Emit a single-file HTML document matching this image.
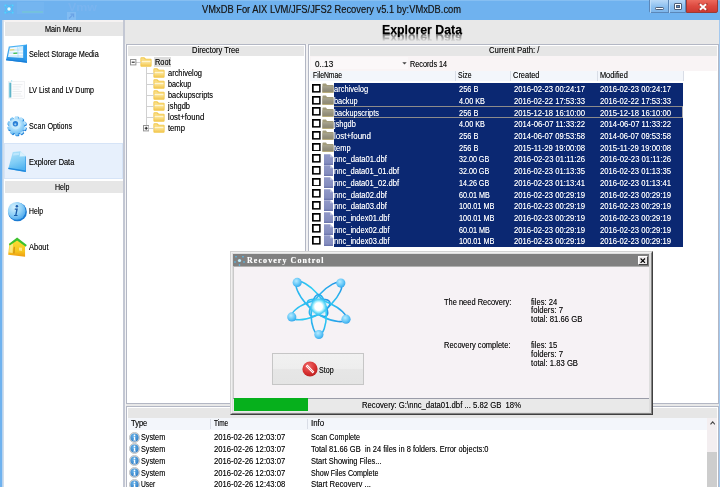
<!DOCTYPE html>
<html><head>
<meta charset="utf-8">
<title>VMxDB</title>
<style>
html,body{margin:0;padding:0;}
body{width:720px;height:487px;overflow:hidden;position:relative;background:#e8e8e8;font-family:"Liberation Sans",sans-serif;font-size:9px;color:#111;}
.a{position:absolute;}
.t{position:absolute;white-space:pre;line-height:11px;height:11px;margin-top:-4.7px;transform-origin:0 50%;text-shadow:0 0 0.7px rgba(0,0,0,0.55);}
.t.w{text-shadow:0 0 0.7px rgba(255,255,255,0.6);}
.w{color:#fff;}
#titlebar{left:0;top:0;width:720px;height:20px;background:#6fb2ef;}
#lb{left:0;top:20px;width:2px;height:467px;background:#6fb2ef;box-shadow:1.5px 0 0 #b9d3ee;}
#rb{left:719px;top:20px;width:1px;height:467px;background:#a4c9ef;}
#side{left:4px;top:20px;width:119px;height:467px;background:#fff;}
.hd{background:#e6e6e6;}
.panel{background:#fff;border:1px solid #b3b7c4;box-sizing:border-box;}
.sel{background:#0b2872;}
.hl{height:1px;background:#d0d0d0;}
.vl{width:1px;background:#d0d0d0;}
.pm{width:5.6px;height:5.6px;box-sizing:border-box;border:0.7px solid #8c8c8c;background:#fff;}
.pm i{position:absolute;left:0.9px;right:0.9px;top:1.75px;height:0.8px;background:#222;}
.pm b{position:absolute;top:0.9px;bottom:0.9px;left:1.75px;width:0.8px;background:#222;}
.cs{width:0.8px;height:10px;background:#d9dde6;}
.cb{position:absolute;left:312.4px;width:8.7px;height:8.7px;box-sizing:border-box;border:1.5px solid #000;background:#fff;}
</style>
</head>
<body>
<svg width="0" height="0" style="position:absolute">
<defs>
<linearGradient id="gy" x1="0" y1="0" x2="0" y2="1"><stop offset="0" stop-color="#fdefb8"></stop><stop offset="0.5" stop-color="#f9dc82"></stop><stop offset="1" stop-color="#f3c855"></stop></linearGradient>
<linearGradient id="gg" x1="0" y1="0" x2="0" y2="1"><stop offset="0" stop-color="#a9a590"></stop><stop offset="0.5" stop-color="#96927f"></stop><stop offset="1" stop-color="#8d8872"></stop></linearGradient>
<linearGradient id="gf" x1="0" y1="0" x2="0" y2="1"><stop offset="0" stop-color="#9199c8"></stop><stop offset="0.8" stop-color="#838cbe"></stop><stop offset="1" stop-color="#6771a8"></stop></linearGradient>
<radialGradient id="gi" cx="0.4" cy="0.3" r="0.8"><stop offset="0" stop-color="#6ab4ea"></stop><stop offset="1" stop-color="#2a78c2"></stop></radialGradient>
<symbol id="fold" viewBox="0 0 12.2 10">
<path d="M0.4 1.5 Q0.4 0.3 1.5 0.3 L4 0.3 Q4.7 0.3 5.2 0.9 L5.9 1.7 L10.6 1.7 Q11.6 1.7 11.6 2.7 L11.6 8.7 Q11.6 9.7 10.6 9.7 L1.4 9.7 Q0.4 9.7 0.4 8.7 Z" fill="#f2c748"></path>
<path d="M1.2 1.2 L4 1.2 L4.9 2.4 L10.8 2.4 L10.8 3.4 L1.2 3.4 Z" fill="#f9dd84"></path>
<path d="M1.3 3.7 L10.8 3.7 L10.8 8.3 Q10.8 8.9 10.2 8.9 L1.9 8.9 Q1.3 8.9 1.3 8.3 Z" fill="url(#gy)"></path>
<path d="M1.9 4.3 L10.2 4.3" stroke="#fffbe8" stroke-width="0.8"></path>
</symbol>
<symbol id="gfold" viewBox="0 0 12 11">
<path d="M0.4 1.4 Q0.4 0.6 1.2 0.6 L4 0.6 L5 2 L11 2 Q11.5 2 11.5 2.6 L11.5 9.6 L0.4 9.6 Z" fill="#a29c7c"></path>
<path d="M0.4 3.2 L11.5 3.2 L11.5 9.2 L0.4 9.2 Z" fill="url(#gg)"></path>
<path d="M0.4 9.4 L11.5 9.4" stroke="#b3a56a" stroke-width="0.8"></path>
</symbol>
<symbol id="gfile" viewBox="0 0 11 11.4">
<path d="M1 0.3 L7 0.3 L10 3.2 L10 11 L1 11 Z" fill="url(#gf)"></path>
<path d="M7 0.3 L7 3.2 L10 3.2 Z" fill="#b9bfdf"></path>
</symbol>
<symbol id="cbx" viewBox="0 0 8.8 8.8"><rect x="0.85" y="0.85" width="7.1" height="7.1" fill="#fff" stroke="#000" stroke-width="1.7"></rect></symbol>
<symbol id="info" viewBox="0 0 11 11">
<circle cx="5.5" cy="5.5" r="5.1" fill="#dcdcdc" stroke="#b4b4b4" stroke-width="0.7"></circle>
<circle cx="5.5" cy="5.5" r="4.1" fill="url(#gi)"></circle>
<circle cx="5.5" cy="3.3" r="0.85" fill="#fff"></circle>
<path d="M4.5 4.7 L6.2 4.7 L6.2 7.8 L6.9 7.8 L6.9 8.5 L4.3 8.5 L4.3 7.8 L4.9 7.8 L4.9 5.4 L4.5 5.4 Z" fill="#fff"></path>
</symbol>
</defs>
</svg>
<!-- window frame -->
<div class="a" id="titlebar"></div>
<div class="a" id="lb"></div>
<div class="a" id="rb"></div>
<span class="t" style="left: 202px; top: 9px; font-size: 10px; color: rgb(26, 26, 26); transform: scaleX(0.9328);">VMxDB For AIX LVM/JFS/JFS2 Recovery v5.1 by:VMxDB.com</span>


<!-- title bar decorations -->
<div class="a" style="left:0;top:0;width:720px;height:1px;background:#86bff2"></div>
<div class="a" style="left:17px;top:2px;width:27px;height:12px;background:#78b8f0;opacity:.6"></div>
<div class="a" style="left:22px;top:10.5px;width:21px;height:2.5px;background:#74c4d8;opacity:.8"></div>
<span class="t" style="left: 68px; top: 6.5px; font-size: 11px; font-weight: bold; color: rgb(121, 180, 239); text-shadow: none; line-height: 12px; height: 12px; margin-top: -6px; transform: scaleX(1.129);">Vmw</span>
<div class="a" style="left:66.5px;top:12px;width:9.5px;height:8px;background:#82bcf2"></div>
<svg class="a" style="left:68px;top:13px" width="7" height="6"><path d="M1 5.5 L4.5 2 M2.5 1.2 L5.6 1.2 L5.6 4.3" fill="none" stroke="#6aa2e6" stroke-width="1.2"></path></svg>
<svg class="a" style="left:3px;top:3px" width="12" height="12" viewBox="0 0 12 12"><g fill="none" stroke="#38c6ff" stroke-width="0.7"><ellipse cx="6" cy="6" rx="5" ry="1.9" transform="rotate(45 6 6)"></ellipse><ellipse cx="6" cy="6" rx="5" ry="1.9" transform="rotate(-45 6 6)"></ellipse></g><circle cx="6" cy="6" r="1.7" fill="#eaffff"></circle><g fill="#4fd4ff"><circle cx="2.3" cy="2.3" r="0.9"></circle><circle cx="9.7" cy="2.3" r="0.9"></circle><circle cx="2.3" cy="9.7" r="0.9"></circle><circle cx="9.7" cy="9.7" r="0.9"></circle></g></svg>
<!-- window buttons -->
<div class="a" style="left:649.4px;top:-1px;width:37px;height:14.2px;box-sizing:border-box;border:0.8px solid #5b87b8;border-radius:0 0 0 2px;background:linear-gradient(#b9d9f7,#8dc0ef 55%,#7db6ec)"></div>
<div class="a" style="left:667.8px;top:0;width:0.9px;height:13px;background:#5b87b8"></div>
<div class="a" style="left:668.7px;top:0;width:0.8px;height:12.5px;background:#c4e0f9;opacity:.8"></div>
<div class="a" style="left:650.2px;top:0;width:0.8px;height:12.5px;background:#c4e0f9;opacity:.8"></div>
<div class="a" style="left:686.1px;top:-1px;width:31.5px;height:14.2px;box-sizing:border-box;border:0.8px solid #9c3a34;border-radius:0 0 2px 0;background:linear-gradient(#ec6a5d,#dd4a40 50%,#cc3a32)"></div>
<div class="a" style="left:655px;top:6.9px;width:9px;height:3.1px;box-sizing:border-box;border:0.7px solid #4d5f78;border-radius:1.2px;background:#fff"></div>
<div class="a" style="left:673.7px;top:3.3px;width:8.5px;height:6.7px;box-sizing:border-box;border:0.6px solid #4d5f78;border-radius:1px;background:#fff"></div>
<div class="a" style="left:676px;top:5.4px;width:4px;height:2.6px;box-sizing:border-box;border:0.6px solid #4d5f78;background:#5f86bd"></div>
<svg class="a" style="left:697.7px;top:2.8px" width="10" height="8" viewBox="0 0 10 8"><path d="M1.7 1.2 L8.3 6.8 M8.3 1.2 L1.7 6.8" stroke="#8d2f2a" stroke-width="2.7" stroke-linecap="square" opacity=".55"></path><path d="M1.9 1.3 L8.1 6.7 M8.1 1.3 L1.9 6.7" stroke="#fff" stroke-width="1.9" stroke-linecap="butt"></path></svg>

<!-- sidebar -->
<div class="a" id="side"></div>
<div class="a" style="left:4px;top:20px;width:119px;height:2px;background:#f5f2f2"></div>
<div class="a hd" style="left:5px;top:22px;width:117.5px;height:13.6px"></div>
<span class="t" style="left: 45px; top: 28.7px; transform: scaleX(0.8084);">Main Menu</span>
<div class="a" style="left:4px;top:143px;width:119px;height:36px;background:#e7f0fc;box-sizing:border-box;border:1px solid #d6e4f7"></div>
<div class="a hd" style="left:5px;top:180.5px;width:117.5px;height:12.4px"></div>
<span class="t" style="left: 55px; top: 186.5px; transform: scaleX(0.7831);">Help</span>
<span class="t" style="left: 29px; top: 53.5px; transform: scaleX(0.8099);">Select Storage Media</span>
<span class="t" style="left: 29px; top: 90px; transform: scaleX(0.7764);">LV List and LV Dump</span>
<span class="t" style="left: 29px; top: 126px; transform: scaleX(0.7995);">Scan Options</span>
<span class="t" style="left: 29px; top: 161.5px; transform: scaleX(0.8232);">Explorer Data</span>
<span class="t" style="left: 29px; top: 211px; transform: scaleX(0.7561);">Help</span>
<span class="t" style="left: 29px; top: 247px; transform: scaleX(0.8329);">About</span>
<div class="a" style="left:123px;top:20px;width:1.5px;height:467px;background:#c3c7d3"></div>


<!-- sidebar icons -->
<svg class="a" style="left:5px;top:43px" width="24" height="22" viewBox="5 43 24 22">
<defs><linearGradient id="s1" x1="0" y1="0" x2="0" y2="1"><stop offset="0" stop-color="#4fb6f5"></stop><stop offset="1" stop-color="#1f8be2"></stop></linearGradient></defs>
<path d="M8.8 46.4 L27 44.4 L27 62.8 L6 60.3 Z" fill="url(#s1)"></path>
<path d="M9.9 47.4 L23.4 45.9 L23.4 58 L7.8 56.9 Z" fill="#d2edfc"></path>
<path d="M10.2 48.2 L19 47.3 L19 48.2 L10.1 49.1 Z M9.6 51.4 L23 50.7 L23 51.5 L9.5 52.2 Z M9 54.3 L23 54 L23 54.8 L8.9 55.2 Z" fill="#fff"></path>
<path d="M9.9 49.6 L14.3 49.3 L14.3 50.3 L9.8 50.6 Z" fill="#f0d052"></path>
<path d="M13.4 52.7 L17.4 52.6 L17.4 53.8 L13.4 53.9 Z" fill="#3cc048"></path>
<path d="M17.8 46.8 L18.1 57.6" stroke="#8fcdf4" stroke-width="0.5"></path>
<path d="M23.4 45.9 L27 44.4 L27 62.8 L23.4 58 Z" fill="#2d9cec" opacity=".9"></path>
<path d="M6 60.3 L27 62.8 L27 61.6 L6.1 59.2 Z" fill="#1a7fd8"></path>
</svg>
<svg class="a" style="left:7px;top:79px" width="20" height="22" viewBox="7 79 20 22">
<rect x="8.6" y="81.6" width="16" height="17" fill="#fdfdfe" stroke="#e4e6ea" stroke-width="0.5"></rect>
<rect x="9.1" y="82.7" width="2.2" height="14.8" fill="#5fb4c8"></rect>
<rect x="8.8" y="82.4" width="0.6" height="15.3" fill="#a5e4f4"></rect>
<g stroke="#d9dce0" stroke-width="0.5"><path d="M12.6 84.6 H22.6 M12.6 86.9 H21 M12.6 89.2 H19.5 M12.6 91.5 H22 M12.6 93.8 H21 M12.6 96.1 H22.6"></path></g>
<rect x="11" y="80.4" width="1.2" height="1" fill="#8edcf2"></rect>
</svg>
<svg class="a" style="left:6px;top:115px" width="22" height="22" viewBox="6 115 22 22">
<defs><radialGradient id="s3" cx="0.4" cy="0.35" r="0.8"><stop offset="0" stop-color="#e2f5fe"></stop><stop offset="0.55" stop-color="#a2d9fa"></stop><stop offset="1" stop-color="#5cb3ef"></stop></radialGradient></defs>
<g transform="translate(17.4 126.6)"><g fill="#1f7ed6">
<rect x="-1.9" y="-9.6" width="3.8" height="19.2" rx="1"></rect><rect x="-1.9" y="-9.6" width="3.8" height="19.2" rx="1" transform="rotate(36)"></rect><rect x="-1.9" y="-9.6" width="3.8" height="19.2" rx="1" transform="rotate(72)"></rect><rect x="-1.9" y="-9.6" width="3.8" height="19.2" rx="1" transform="rotate(108)"></rect><rect x="-1.9" y="-9.6" width="3.8" height="19.2" rx="1" transform="rotate(144)"></rect><circle r="7.6"></circle></g></g>
<g transform="translate(16.7 125.8)"><g fill="url(#s3)">
<rect x="-1.9" y="-9.6" width="3.8" height="19.2" rx="1"></rect><rect x="-1.9" y="-9.6" width="3.8" height="19.2" rx="1" transform="rotate(36)"></rect><rect x="-1.9" y="-9.6" width="3.8" height="19.2" rx="1" transform="rotate(72)"></rect><rect x="-1.9" y="-9.6" width="3.8" height="19.2" rx="1" transform="rotate(108)"></rect><rect x="-1.9" y="-9.6" width="3.8" height="19.2" rx="1" transform="rotate(144)"></rect></g><circle r="7.6" fill="url(#s3)"></circle><circle r="4.8" cx="-0.8" cy="-1.2" fill="#c6eafc"></circle><circle r="2.7" cx="-1.3" cy="-2" fill="#2a7fd6"></circle><circle r="1.1" cx="-1.4" cy="-1.5" fill="#9fd0f4"></circle></g>
</svg>
<svg class="a" style="left:7px;top:150px" width="20" height="23" viewBox="7 150 20 23">
<defs><linearGradient id="s4" x1="0" y1="0" x2="0.3" y2="1"><stop offset="0" stop-color="#b4e4fb"></stop><stop offset="0.6" stop-color="#80cdf6"></stop><stop offset="1" stop-color="#52b4f0"></stop></linearGradient></defs>
<path d="M12.8 151.9 L20.5 151.2 L25.8 156.2 L25.8 171.9 L8.2 169.1 Z" fill="url(#s4)"></path>
<path d="M8.2 169.1 L25.8 171.9 L25.8 170.5 L8.6 167.8 Z" fill="#2088dd"></path>
<path d="M25.2 156.4 L25.8 156.2 L25.8 171.9 L25 171.8 Z" fill="#2f95e3"></path>
<path d="M20.5 151.2 L19.6 156.4 L25.8 156.2 Z" fill="#d9f1fd"></path>
<path d="M13.6 153.2 L19.4 152.7 L19 155 L13 155.6 Z" fill="#c4e9fc" opacity=".8"></path>
</svg>
<svg class="a" style="left:6px;top:200px" width="22" height="22" viewBox="6 200 22 22">
<defs><radialGradient id="s5" cx="0.36" cy="0.3" r="0.78"><stop offset="0" stop-color="#d4f0fd"></stop><stop offset="0.55" stop-color="#8fd0f7"></stop><stop offset="1" stop-color="#46a4ea"></stop></radialGradient></defs>
<circle cx="17.5" cy="211.9" r="9.4" fill="#1a7ad2"></circle>
<circle cx="16.7" cy="210.9" r="8.9" fill="url(#s5)"></circle>
<circle cx="16.9" cy="206.2" r="1.25" fill="#1a5cab"></circle>
<path d="M14.9 208.6 L17.9 208.6 L16.5 214.9 L17.6 214.9 L17.4 215.9 L13.9 215.9 L14.1 214.9 L15.2 214.9 L16.2 209.7 L14.7 209.7 Z" fill="#1a5cab"></path>
</svg>
<svg class="a" style="left:6px;top:236px" width="22" height="22" viewBox="6 236 22 22">
<defs><linearGradient id="s6" x1="0" y1="0" x2="0" y2="1"><stop offset="0" stop-color="#fbe23a"></stop><stop offset="0.7" stop-color="#f6c51e"></stop><stop offset="1" stop-color="#ee9c10"></stop></linearGradient></defs>
<path d="M9.4 243.6 L17.1 238.6 L25 244.6 L25.1 256.7 L8.2 254.8 Z" fill="url(#s6)"></path>
<path d="M9.8 245 L13 243.2 L12.6 253 L9.2 252.6 Z" fill="#fdf2a0" opacity=".75"></path>
<path d="M13.6 247.4 L15 246.6 L14.6 253.6 L13.2 253.4 Z" fill="#c98a10" opacity=".8"></path>
<path d="M8.9 243.9 L17.1 237.4 L26.8 244.9 L25.8 246.8 L17.1 240.4 L9.7 245.6 Z" fill="#3cc22e"></path>
<path d="M19 247.5 L22 247.8 L22 251 L19 250.6 Z" fill="#fdf0a0" opacity=".8"></path>
</svg>

<!-- heading -->
<span class="t" id="h1" style="left: 381.5px; top: 30px; font-size: 12px; font-weight: bold; color: rgb(0, 0, 0); line-height: 14px; height: 14px; margin-top: -7px; transform: scaleX(1.0252);">Explorer Data</span>
<span class="t" id="h1r" style="left: 381.5px; top: 38.3px; font-size: 12px; font-weight: bold; color: rgb(0, 0, 0); line-height: 14px; height: 14px; margin-top: -7px; mask-image: linear-gradient(rgba(0, 0, 0, 0) 25%, rgba(0, 0, 0, 0.6) 82%); transform: scaleX(1.0252) scaleY(-1);">Explorer Data</span>

<!-- directory tree panel -->
<div class="a" style="left:124.5px;top:44px;width:1.5px;height:443px;background:#f3f3f5"></div>
<div class="a" style="left:306px;top:44px;width:2px;height:360px;background:#f1f1f3"></div>
<div class="a panel" style="left:126px;top:44px;width:180px;height:360px"></div>
<div class="a hd" style="left:128px;top:46px;width:176px;height:9.6px"></div>
<span class="t" style="left: 191.5px; top: 49.8px; transform: scaleX(0.8405);">Directory Tree</span>

<div class="a" style="left:153.7px;top:56.8px;width:17.7px;height:10px;background:#dcdcdc"></div>
<span class="t" style="left: 154.8px; top: 61.4px; transform: scaleX(0.8204);">Root</span>
<svg class="a" style="left:140.2px;top:57.3px" width="12.2" height="10"><use href="#fold"></use></svg>
<div class="a hl" style="left:136px;top:62.2px;width:4.5px"></div>
<div class="a vl" style="left:146.2px;top:67.3px;height:60.5px"></div>
<!-- tree:begin -->
<svg class="a" style="left:153.3px;top:67.70px" width="12.2" height="10"><use href="#fold"></use></svg>
<div class="a hl" style="left:146.5px;top:72.50px;width:7px"></div>
<span class="t" style="left: 168px; top: 72.9px; transform: scaleX(0.8286);">archivelog</span>
<svg class="a" style="left:153.3px;top:78.72px" width="12.2" height="10"><use href="#fold"></use></svg>
<div class="a hl" style="left:146.5px;top:83.52px;width:7px"></div>
<span class="t" style="left: 168px; top: 83.92px; transform: scaleX(0.8009);">backup</span>
<svg class="a" style="left:153.3px;top:89.74px" width="12.2" height="10"><use href="#fold"></use></svg>
<div class="a hl" style="left:146.5px;top:94.54px;width:7px"></div>
<span class="t" style="left: 168px; top: 94.94px; transform: scaleX(0.8177);">backupscripts</span>
<svg class="a" style="left:153.3px;top:100.76px" width="12.2" height="10"><use href="#fold"></use></svg>
<div class="a hl" style="left:146.5px;top:105.56px;width:7px"></div>
<span class="t" style="left: 168px; top: 105.96px; transform: scaleX(0.8292);">jshgdb</span>
<svg class="a" style="left:153.3px;top:111.78px" width="12.2" height="10"><use href="#fold"></use></svg>
<div class="a hl" style="left:146.5px;top:116.58px;width:7px"></div>
<span class="t" style="left: 168px; top: 116.98px; transform: scaleX(0.8673);">lost+found</span>
<svg class="a" style="left:153.3px;top:122.80px" width="12.2" height="10"><use href="#fold"></use></svg>
<div class="a hl" style="left:146.5px;top:127.60px;width:7px"></div>
<span class="t" style="left: 168px; top: 128px; transform: scaleX(0.8493);">temp</span>
<!-- tree:end -->
<svg class="a" style="left:130.2px;top:59.2px" width="6.4" height="6.4" viewBox="0 0 6.4 6.4"><rect x="0.5" y="0.5" width="5.4" height="5.4" fill="#fff" stroke="#959595" stroke-width="1"></rect><path d="M1.7 3.2 H4.7" stroke="#222" stroke-width="1.1"></path></svg>
<svg class="a" style="left:143.1px;top:125.3px" width="6.4" height="6.4" viewBox="0 0 6.4 6.4"><rect x="0.5" y="0.5" width="5.4" height="5.4" fill="#fff" stroke="#959595" stroke-width="1"></rect><path d="M1.7 3.2 H4.7 M3.2 1.7 V4.7" stroke="#222" stroke-width="1.1"></path></svg>

<!-- file list panel -->
<div class="a panel" style="left:308px;top:44px;width:411px;height:360px"></div>
<div class="a hd" style="left:310px;top:46px;width:407px;height:9.6px"></div>
<span class="t" style="left: 488.5px; top: 49.8px; transform: scaleX(0.8628);">Current Path: /</span>
<div class="a" style="left:310px;top:55.6px;width:407px;height:15px;background:#f9f4f5"></div>
<div class="a" style="left:310px;top:70.5px;width:373px;height:10.5px;background:#f3f6fb"></div>
<div class="a" style="left:311px;top:57px;width:97px;height:12px;background:#fbf8f9"></div>
<span class="t" style="left: 314.6px; top: 63.2px; transform: scaleX(0.9086);">0..13</span>
<svg class="a" style="left:401.5px;top:62px" width="5" height="3"><path d="M0.3 0.2 L4.7 0.2 L2.5 2.6 Z" fill="#444"></path></svg>
<span class="t" style="left: 410.1px; top: 63.2px; transform: scaleX(0.806);">Records 14</span>
<span class="t" style="left: 313.2px; top: 74.6px; transform: scaleX(0.7555);">FileNmae</span>
<span class="t" style="left: 458.2px; top: 74.6px; transform: scaleX(0.7707);">Size</span>
<span class="t" style="left: 513.2px; top: 74.6px; transform: scaleX(0.8273);">Created</span>
<span class="t" style="left: 599.6px; top: 74.6px; transform: scaleX(0.8169);">Modified</span>
<div class="a cs" style="left:455px;top:71px"></div>
<div class="a cs" style="left:510.2px;top:71px"></div>
<div class="a cs" style="left:596.7px;top:71px"></div>
<div class="a cs" style="left:682.7px;top:71px"></div>
<div class="a sel" style="left:333.5px;top:83px;width:349.5px;height:164px"></div>

<div class="a" style="left:333.5px;top:106px;width:349.5px;height:12.3px;box-sizing:border-box;border:1px solid #8d8b8b;border-left:none;border-right-color:#a9a9b0"></div>
<!-- rows:begin -->
<svg class="a" style="left:312.4px;top:84.05px" width="8.8" height="8.8"><use href="#cbx"></use></svg>
<svg class="a" style="left:322px;top:83.40px" width="12" height="11"><use href="#gfold"></use></svg>
<span class="t w" style="left: 334px; top: 88.9px; transform: scaleX(0.8335);">archivelog</span>
<span class="t w" style="left: 458.6px; top: 88.9px; transform: scaleX(0.8244);">256 B</span>
<span class="t w" style="left: 513.8px; top: 88.9px; transform: scaleX(0.8495);">2016-02-23 00:24:17</span>
<span class="t w" style="left: 599.8px; top: 88.9px; transform: scaleX(0.8495);">2016-02-23 00:24:17</span>
<svg class="a" style="left:312.4px;top:95.75px" width="8.8" height="8.8"><use href="#cbx"></use></svg>
<svg class="a" style="left:322px;top:95.10px" width="12" height="11"><use href="#gfold"></use></svg>
<span class="t w" style="left: 334px; top: 100.6px; transform: scaleX(0.8164);">backup</span>
<span class="t w" style="left: 458.6px; top: 100.6px; transform: scaleX(0.8117);">4.00 KB</span>
<span class="t w" style="left: 513.8px; top: 100.6px; transform: scaleX(0.8495);">2016-02-22 17:53:33</span>
<span class="t w" style="left: 599.8px; top: 100.6px; transform: scaleX(0.8495);">2016-02-22 17:53:33</span>
<svg class="a" style="left:312.4px;top:107.45px" width="8.8" height="8.8"><use href="#cbx"></use></svg>
<svg class="a" style="left:322px;top:106.80px" width="12" height="11"><use href="#gfold"></use></svg>
<span class="t w" style="left: 334px; top: 112.3px; transform: scaleX(0.8159);">backupscripts</span>
<span class="t w" style="left: 458.6px; top: 112.3px; transform: scaleX(0.8244);">256 B</span>
<span class="t w" style="left: 513.8px; top: 112.3px; transform: scaleX(0.8495);">2015-12-18 16:10:00</span>
<span class="t w" style="left: 599.8px; top: 112.3px; transform: scaleX(0.8495);">2015-12-18 16:10:00</span>
<svg class="a" style="left:312.4px;top:119.15px" width="8.8" height="8.8"><use href="#cbx"></use></svg>
<svg class="a" style="left:322px;top:118.50px" width="12" height="11"><use href="#gfold"></use></svg>
<span class="t w" style="left: 334px; top: 124px; transform: scaleX(0.8217);">jshgdb</span>
<span class="t w" style="left: 458.6px; top: 124px; transform: scaleX(0.8117);">4.00 KB</span>
<span class="t w" style="left: 513.8px; top: 124px; transform: scaleX(0.8564);">2014-06-07 11:33:22</span>
<span class="t w" style="left: 599.8px; top: 124px; transform: scaleX(0.8564);">2014-06-07 11:33:22</span>
<svg class="a" style="left:312.4px;top:130.85px" width="8.8" height="8.8"><use href="#cbx"></use></svg>
<svg class="a" style="left:322px;top:130.20px" width="12" height="11"><use href="#gfold"></use></svg>
<span class="t w" style="left: 334px; top: 135.7px; transform: scaleX(0.8852);">lost+found</span>
<span class="t w" style="left: 458.6px; top: 135.7px; transform: scaleX(0.8244);">256 B</span>
<span class="t w" style="left: 513.8px; top: 135.7px; transform: scaleX(0.8495);">2014-06-07 09:53:58</span>
<span class="t w" style="left: 599.8px; top: 135.7px; transform: scaleX(0.8495);">2014-06-07 09:53:58</span>
<svg class="a" style="left:312.4px;top:142.55px" width="8.8" height="8.8"><use href="#cbx"></use></svg>
<svg class="a" style="left:322px;top:141.90px" width="12" height="11"><use href="#gfold"></use></svg>
<span class="t w" style="left: 334px; top: 147.4px; transform: scaleX(0.8294);">temp</span>
<span class="t w" style="left: 458.6px; top: 147.4px; transform: scaleX(0.8244);">256 B</span>
<span class="t w" style="left: 513.8px; top: 147.4px; transform: scaleX(0.8564);">2015-11-29 19:00:08</span>
<span class="t w" style="left: 599.8px; top: 147.4px; transform: scaleX(0.8564);">2015-11-29 19:00:08</span>
<svg class="a" style="left:312.4px;top:154.25px" width="8.8" height="8.8"><use href="#cbx"></use></svg>
<svg class="a" style="left:323px;top:153.50px" width="11" height="11.4"><use href="#gfile"></use></svg>
<span class="t w" style="left: 334px; top: 159.1px; transform: scaleX(0.8524);">nnc_data01.dbf</span>
<span class="t w" style="left: 458.6px; top: 159.1px; transform: scaleX(0.7941);">32.00 GB</span>
<span class="t w" style="left: 513.8px; top: 159.1px; transform: scaleX(0.8564);">2016-02-23 01:11:26</span>
<span class="t w" style="left: 599.8px; top: 159.1px; transform: scaleX(0.8564);">2016-02-23 01:11:26</span>
<svg class="a" style="left:312.4px;top:165.95px" width="8.8" height="8.8"><use href="#cbx"></use></svg>
<svg class="a" style="left:323px;top:165.20px" width="11" height="11.4"><use href="#gfile"></use></svg>
<span class="t w" style="left: 334px; top: 170.8px; transform: scaleX(0.8459);">nnc_data01_01.dbf</span>
<span class="t w" style="left: 458.6px; top: 170.8px; transform: scaleX(0.7941);">32.00 GB</span>
<span class="t w" style="left: 513.8px; top: 170.8px; transform: scaleX(0.8495);">2016-02-23 01:13:35</span>
<span class="t w" style="left: 599.8px; top: 170.8px; transform: scaleX(0.8495);">2016-02-23 01:13:35</span>
<svg class="a" style="left:312.4px;top:177.65px" width="8.8" height="8.8"><use href="#cbx"></use></svg>
<svg class="a" style="left:323px;top:176.90px" width="11" height="11.4"><use href="#gfile"></use></svg>
<span class="t w" style="left: 334px; top: 182.5px; transform: scaleX(0.8459);">nnc_data01_02.dbf</span>
<span class="t w" style="left: 458.6px; top: 182.5px; transform: scaleX(0.7941);">14.26 GB</span>
<span class="t w" style="left: 513.8px; top: 182.5px; transform: scaleX(0.8495);">2016-02-23 01:13:41</span>
<span class="t w" style="left: 599.8px; top: 182.5px; transform: scaleX(0.8495);">2016-02-23 01:13:41</span>
<svg class="a" style="left:312.4px;top:189.35px" width="8.8" height="8.8"><use href="#cbx"></use></svg>
<svg class="a" style="left:323px;top:188.60px" width="11" height="11.4"><use href="#gfile"></use></svg>
<span class="t w" style="left: 334px; top: 194.2px; transform: scaleX(0.8524);">nnc_data02.dbf</span>
<span class="t w" style="left: 458.6px; top: 194.2px; transform: scaleX(0.7994);">60.01 MB</span>
<span class="t w" style="left: 513.8px; top: 194.2px; transform: scaleX(0.8495);">2016-02-23 00:29:19</span>
<span class="t w" style="left: 599.8px; top: 194.2px; transform: scaleX(0.8495);">2016-02-23 00:29:19</span>
<svg class="a" style="left:312.4px;top:201.05px" width="8.8" height="8.8"><use href="#cbx"></use></svg>
<svg class="a" style="left:323px;top:200.30px" width="11" height="11.4"><use href="#gfile"></use></svg>
<span class="t w" style="left: 334px; top: 205.9px; transform: scaleX(0.8524);">nnc_data03.dbf</span>
<span class="t w" style="left: 458.6px; top: 205.9px; transform: scaleX(0.8132);">100.01 MB</span>
<span class="t w" style="left: 513.8px; top: 205.9px; transform: scaleX(0.8495);">2016-02-23 00:29:19</span>
<span class="t w" style="left: 599.8px; top: 205.9px; transform: scaleX(0.8495);">2016-02-23 00:29:19</span>
<svg class="a" style="left:312.4px;top:212.75px" width="8.8" height="8.8"><use href="#cbx"></use></svg>
<svg class="a" style="left:323px;top:212.00px" width="11" height="11.4"><use href="#gfile"></use></svg>
<span class="t w" style="left: 334px; top: 217.6px; transform: scaleX(0.8401);">nnc_index01.dbf</span>
<span class="t w" style="left: 458.6px; top: 217.6px; transform: scaleX(0.8132);">100.01 MB</span>
<span class="t w" style="left: 513.8px; top: 217.6px; transform: scaleX(0.8495);">2016-02-23 00:29:19</span>
<span class="t w" style="left: 599.8px; top: 217.6px; transform: scaleX(0.8495);">2016-02-23 00:29:19</span>
<svg class="a" style="left:312.4px;top:224.45px" width="8.8" height="8.8"><use href="#cbx"></use></svg>
<svg class="a" style="left:323px;top:223.70px" width="11" height="11.4"><use href="#gfile"></use></svg>
<span class="t w" style="left: 334px; top: 229.3px; transform: scaleX(0.8401);">nnc_index02.dbf</span>
<span class="t w" style="left: 458.6px; top: 229.3px; transform: scaleX(0.7994);">60.01 MB</span>
<span class="t w" style="left: 513.8px; top: 229.3px; transform: scaleX(0.8495);">2016-02-23 00:29:19</span>
<span class="t w" style="left: 599.8px; top: 229.3px; transform: scaleX(0.8495);">2016-02-23 00:29:19</span>
<svg class="a" style="left:312.4px;top:236.15px" width="8.8" height="8.8"><use href="#cbx"></use></svg>
<svg class="a" style="left:323px;top:235.40px" width="11" height="11.4"><use href="#gfile"></use></svg>
<span class="t w" style="left: 334px; top: 241px; transform: scaleX(0.8401);">nnc_index03.dbf</span>
<span class="t w" style="left: 458.6px; top: 241px; transform: scaleX(0.8132);">100.01 MB</span>
<span class="t w" style="left: 513.8px; top: 241px; transform: scaleX(0.8495);">2016-02-23 00:29:19</span>
<span class="t w" style="left: 599.8px; top: 241px; transform: scaleX(0.8495);">2016-02-23 00:29:19</span>
<!-- rows:end -->

<!-- log panel -->
<div class="a panel" style="left:126px;top:406px;width:593px;height:90px"></div>
<div class="a hd" style="left:128px;top:408px;width:589px;height:9.6px"></div>
<div class="a" style="left:128px;top:417.6px;width:579px;height:12px;background:#f3f6fb"></div>

<span class="t" style="left: 130.8px; top: 422.9px; transform: scaleX(0.8301);">Type</span>
<span class="t" style="left: 213.8px; top: 422.9px; transform: scaleX(0.7218);">Time</span>
<span class="t" style="left: 310.5px; top: 422.9px; transform: scaleX(0.8791);">Info</span>
<div class="a cs" style="left:210px;top:418.5px"></div>
<div class="a cs" style="left:307px;top:418.5px"></div>
<div class="a" style="left:707.4px;top:417.5px;width:9.6px;height:70px;background:#f3eef0"></div>
<div class="a" style="left:707.4px;top:451.7px;width:9.6px;height:36px;background:#cdcdcd"></div>
<svg class="a" style="left:709.6px;top:421px" width="5.4" height="4"><path d="M0.5 3.4 L2.7 0.9 L4.9 3.4" fill="none" stroke="#444" stroke-width="1.1"></path></svg>
<!-- log:begin -->
<svg class="a" style="left:128.5px;top:431.50px" width="11" height="11"><use href="#info"></use></svg>
<span class="t" style="left: 140.8px; top: 437px; transform: scaleX(0.8062);">System</span>
<span class="t" style="left: 213.8px; top: 437px; transform: scaleX(0.8519);">2016-02-26 12:03:07</span>
<span class="t" style="left: 310.5px; top: 437px; transform: scaleX(0.7961);">Scan Complete</span>
<svg class="a" style="left:128.5px;top:443.25px" width="11" height="11"><use href="#info"></use></svg>
<span class="t" style="left: 140.8px; top: 448.75px; transform: scaleX(0.8062);">System</span>
<span class="t" style="left: 213.8px; top: 448.75px; transform: scaleX(0.8519);">2016-02-26 12:03:07</span>
<span class="t" style="left: 310.5px; top: 448.75px; transform: scaleX(0.8349);">Total 81.66 GB  in 24 files in 8 folders. Error objects:0</span>
<svg class="a" style="left:128.5px;top:455.00px" width="11" height="11"><use href="#info"></use></svg>
<span class="t" style="left: 140.8px; top: 460.5px; transform: scaleX(0.8062);">System</span>
<span class="t" style="left: 213.8px; top: 460.5px; transform: scaleX(0.8519);">2016-02-26 12:03:07</span>
<span class="t" style="left: 310.5px; top: 460.5px; transform: scaleX(0.829);">Start Showing Files...</span>
<svg class="a" style="left:128.5px;top:466.75px" width="11" height="11"><use href="#info"></use></svg>
<span class="t" style="left: 140.8px; top: 472.25px; transform: scaleX(0.8062);">System</span>
<span class="t" style="left: 213.8px; top: 472.25px; transform: scaleX(0.8519);">2016-02-26 12:03:07</span>
<span class="t" style="left: 310.5px; top: 472.25px; transform: scaleX(0.7937);">Show Files Complete</span>
<svg class="a" style="left:128.5px;top:478.50px" width="11" height="11"><use href="#info"></use></svg>
<span class="t" style="left: 140.8px; top: 484px; transform: scaleX(0.7468);">User</span>
<span class="t" style="left: 213.8px; top: 484px; transform: scaleX(0.8519);">2016-02-26 12:43:08</span>
<span class="t" style="left: 310.5px; top: 484px; transform: scaleX(0.8629);">Start Recovery ...</span>
<!-- log:end -->

<!-- dialog -->
<div class="a" id="dlg" style="left:230px;top:251px;width:423px;height:163.5px;background:#dedede;box-sizing:border-box;border:1px solid #d2d2d2;border-right-color:#404040;border-bottom-color:#404040"></div>
<div class="a" style="left:231px;top:252px;width:421px;height:161.5px;box-sizing:border-box;border:1px solid #f0f0f0;border-right-color:#858585;border-bottom-color:#858585"></div>
<div class="a" style="left:233px;top:254px;width:416.4px;height:11.8px;background:#808080"></div>
<div class="a" style="left:233px;top:265.8px;width:416.4px;height:146px;background:#f6f2f5;box-sizing:border-box;border-left:1px solid #c9c9c9;border-top:1px solid #b0b0b0"></div>


<!-- dialog body -->
<div class="a" style="left:638px;top:256px;width:10px;height:8.5px;background:#ece9ea;box-sizing:border-box;border:0.7px solid #fff;border-right-color:#444;border-bottom-color:#444"></div>
<svg class="a" style="left:640.2px;top:257.6px" width="5.6" height="5.4"><path d="M0.6 0.5 L5 4.9 M5 0.5 L0.6 4.9" stroke="#000" stroke-width="1.1"></path></svg>
<span class="t w" id="dt" style="left: 246.7px; top: 260px; font-family: &quot;Liberation Serif&quot;, serif; font-weight: bold; font-size: 8.2px; letter-spacing: 1.1px; transform: scaleX(0.9757);">Recovery Control</span>
<svg class="a" style="left:234px;top:254.5px" width="11" height="11" viewBox="0 0 11 11"><circle cx="5.5" cy="5.5" r="1.6" fill="#bff0ff"></circle><g fill="#4fc6ff"><circle cx="2" cy="1.8" r="0.8"></circle><circle cx="9" cy="1.8" r="0.8"></circle><circle cx="1" cy="7" r="0.8"></circle><circle cx="10" cy="7" r="0.8"></circle><circle cx="5.5" cy="10" r="0.8"></circle></g></svg>

<svg class="a" style="left:284px;top:274px" width="70" height="70" viewBox="284 274 70 70">
<defs>
<radialGradient id="orb" gradientUnits="userSpaceOnUse" cx="318.6" cy="306.6" r="34"><stop offset="0" stop-color="#2fd0f4"></stop><stop offset="0.45" stop-color="#2bb8f0"></stop><stop offset="1" stop-color="#2288e0"></stop></radialGradient>
<radialGradient id="ball" cx="0.4" cy="0.35" r="0.7"><stop offset="0" stop-color="#b8ebff"></stop><stop offset="0.6" stop-color="#62c6f7"></stop><stop offset="1" stop-color="#2fa4ea"></stop></radialGradient>
<radialGradient id="nuc" cx="0.5" cy="0.5" r="0.5"><stop offset="0" stop-color="#ffffff"></stop><stop offset="0.4" stop-color="#ffffff"></stop><stop offset="0.62" stop-color="#8ce8fc" stop-opacity="0.95"></stop><stop offset="1" stop-color="#38c8f4" stop-opacity="0"></stop></radialGradient>
</defs>
<g fill="none" stroke="url(#orb)" stroke-width="1.6">
<ellipse cx="311.9" cy="299.0" rx="22.2" ry="7.6" transform="rotate(-131.5 311.9 299.0)"></ellipse>
<ellipse cx="325.6" cy="299.2" rx="22.2" ry="7.6" transform="rotate(-46.6 325.6 299.2)"></ellipse>
<ellipse cx="310.8" cy="309.6" rx="20.4" ry="7.6" transform="rotate(159.0 310.8 309.6)"></ellipse>
<ellipse cx="326.8" cy="310.4" rx="21.1" ry="7.6" transform="rotate(24.7 326.8 310.4)"></ellipse>
<ellipse cx="318.7" cy="314.6" rx="20.0" ry="7.6" transform="rotate(89.4 318.7 314.6)"></ellipse>
</g>
<circle cx="318.6" cy="306.6" r="9.5" fill="url(#nuc)"></circle>
<g fill="url(#ball)">
<circle cx="297.2" cy="282.4" r="4.6"></circle><circle cx="340.8" cy="283.1" r="4.6"></circle><circle cx="291.8" cy="316.9" r="4.6"></circle><circle cx="346" cy="319.2" r="4.6"></circle><circle cx="318.9" cy="334.5" r="4.6"></circle>
</g>
</svg>

<div class="a" style="left:272.2px;top:353.3px;width:92.1px;height:31.4px;box-sizing:border-box;border:1px solid #c6c6c6;background:linear-gradient(#f1f1f1 0%,#eeeeee 48%,#e6e6e6 52%,#e4e4e4 100%)"></div>
<svg class="a" style="left:302.4px;top:361.4px" width="16" height="16" viewBox="0 0 16 16"><defs><radialGradient id="rd" cx="0.4" cy="0.3" r="0.8"><stop offset="0" stop-color="#f06a6a"></stop><stop offset="0.6" stop-color="#d62f2f"></stop><stop offset="1" stop-color="#b01c1c"></stop></radialGradient></defs><circle cx="8" cy="8" r="7.6" fill="url(#rd)"></circle><path d="M3.6 5.3 L10.7 12.4 L12.4 10.7 L5.3 3.6 Z" fill="#fff"></path><path d="M4.8 4.8 L11.2 11.2" stroke="#e06060" stroke-width="0.6"></path></svg>
<span class="t" style="left: 319.2px; top: 369.8px; transform: scaleX(0.7885);">Stop</span>

<span class="t" style="left: 444px; top: 301.3px; transform: scaleX(0.8304);">The need Recovery:</span>
<span class="t" style="left: 530.5px; top: 301.3px; transform: scaleX(0.8443);">files: 24</span>
<span class="t" style="left: 530.5px; top: 310.1px; transform: scaleX(0.8641);">folders: 7</span>
<span class="t" style="left: 530.5px; top: 318.9px; transform: scaleX(0.8543);">total: 81.66 GB</span>
<span class="t" style="left: 444px; top: 345px; transform: scaleX(0.836);">Recovery complete:</span>
<span class="t" style="left: 530.5px; top: 345px; transform: scaleX(0.8443);">files: 15</span>
<span class="t" style="left: 530.5px; top: 354px; transform: scaleX(0.8641);">folders: 7</span>
<span class="t" style="left: 530.5px; top: 363px; transform: scaleX(0.8538);">total: 1.83 GB</span>

<div class="a" style="left:233px;top:397.5px;width:416px;height:14px;background:#e9e9e9;border-top:0.8px solid #9a9ca8;box-sizing:border-box"></div>
<div class="a" style="left:234px;top:398px;width:73.8px;height:12.8px;background:#06b01c"></div>
<span class="t" style="left: 361.8px; top: 405px; transform: scaleX(0.8566);">Recovery: G:\nnc_data01.dbf ... 5.82 GB  18%</span>


</body></html>
